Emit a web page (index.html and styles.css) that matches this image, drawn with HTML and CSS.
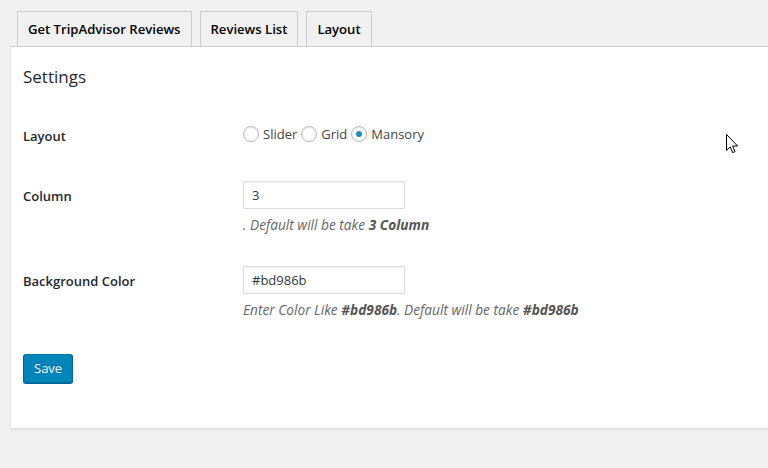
FILE: index.html
```html
<!DOCTYPE html>
<html>
<head>
<meta charset="utf-8">
<link rel="stylesheet" href="styles.css">
</head>
<body>
<div class="wrap">
  <nav class="tabs">
    <a class="tab">Get TripAdvisor Reviews</a>
    <a class="tab">Reviews List</a>
    <a class="tab">Layout</a>
  </nav>
  <div class="panel">
    <h2 class="title">Settings</h2>
    <div class="row row-layout">
      <div class="label">Layout</div>
      <div class="field radios">
        <label class="radio"><span class="dot"></span>Slider</label>
        <label class="radio"><span class="dot"></span>Grid</label>
        <label class="radio"><span class="dot checked"></span>Mansory</label>
      </div>
    </div>
    <div class="row">
      <div class="label">Column</div>
      <div class="field">
        <div class="input">3</div>
        <p class="desc">. Default will be take <b>3 Column</b></p>
      </div>
    </div>
    <div class="row">
      <div class="label">Background Color</div>
      <div class="field">
        <div class="input">#bd986b</div>
        <p class="desc">Enter Color Like <b>#bd986b</b>. Default will be take <b>#bd986b</b></p>
      </div>
    </div>
    <div class="actions">
      <button class="btn">Save</button>
    </div>
  </div>
</div>
<svg class="cursor" width="13" height="21" viewBox="0 0 13 21">
  <path d="M0.5 0.5 L0.5 16.5 L4.2 12.9 L6.6 18.6 L9 17.6 L6.6 12 L11.6 12 Z" fill="#fff" stroke="#000" stroke-width="1" stroke-linejoin="miter"/>
</svg>
</body>
</html>
```
FILE: styles.css
```css
html, body {
  margin: 0;
  padding: 0;
  background: #f1f1f1;
}
body {
  font-family: "Open Sans", "Noto Sans", sans-serif;
  color: #23282d;
  font-size: 13px;
  overflow: hidden;
  width: 768px;
  height: 468px;
  position: relative;
}
.wrap {
  padding: 11px 0 0 10px;
}
.tabs {
  display: flex;
  gap: 8px;
  padding-left: 7px;
  border-bottom: 1px solid #ccc;
  height: 36px;
  box-sizing: border-box;
}
.tab {
  display: block;
  box-sizing: border-box;
  height: 35px;
  padding: 0 10px;
  border: 1px solid #ccc;
  border-bottom: none;
  background: #f1f1f1;
  font-size: 13.1px;
  font-weight: 600;
  line-height: 35px;
  color: #000;
  white-space: nowrap;
}
.panel {
  background: #fff;
  border-left: 1px solid #e5e5e5;
  box-shadow: 0 1px 1px rgba(0,0,0,0.06);
  border-bottom: 1px solid #e2e2e2;
  height: 382px;
  box-sizing: border-box;
  padding: 0 0 0 12px;
}
.title {
  margin: 0;
  padding-top: 19px;
  height: 41px;
  box-sizing: border-box;
  font-size: 17px;
  font-weight: 400;
  line-height: 22px;
  color: #23282d;
}
.row {
  display: grid;
  grid-template-columns: 220px 1fr;
  min-height: 85px;
}
.row-layout {
  min-height: 60px;
  margin-top: 19px;
}
.label {
  padding-top: 20px;
  font-size: 13px;
  font-weight: 600;
  line-height: 18px;
  color: #23282d;
}
.field {
  padding-top: 14px;
}
.radios {
  padding-top: 18px;
  display: flex;
  align-items: center;
  line-height: 18px;
  height: 18px;
  font-size: 13px;
  color: #444;
}
.radio {
  display: flex;
  align-items: center;
  margin-right: 4px;
}
.dot {
  width: 14px;
  height: 14px;
  border: 1px solid #b4b9be;
  border-radius: 50%;
  box-shadow: inset 0 1px 2px rgba(0,0,0,0.1);
  margin-right: 4px;
  position: relative;
  background: #fff;
}
.dot.checked::after {
  content: "";
  position: absolute;
  left: 4px;
  top: 4px;
  width: 6px;
  height: 6px;
  border-radius: 50%;
  background: #1e8cbe;
}
.input {
  width: 162px;
  height: 28px;
  box-sizing: border-box;
  border: 1px solid #ddd;
  box-shadow: inset 0 1px 2px rgba(0,0,0,0.07);
  padding: 0 8px;
  line-height: 26px;
  font-size: 13px;
  color: #32373c;
}
.desc {
  margin: 7px 0 0;
  font-size: 13.7px;
  line-height: 18px;
  font-style: italic;
  color: #666;
  white-space: nowrap;
}
.desc b {
  font-weight: 700;
  color: #555;
}
.actions {
  padding-top: 17px;
}
.btn {
  display: block;
  height: 29px;
  padding: 0 10px 1px;
  font-family: inherit;
  font-size: 13px;
  line-height: 26px;
  color: #fff;
  background: #0085ba;
  border: 1px solid;
  border-color: #0073aa #006799 #006799;
  border-radius: 3px;
  box-shadow: 0 1px 0 #006799;
  text-shadow: 0 -1px 1px #006799;
}
.cursor {
  position: absolute;
  left: 726px;
  top: 134px;
}
```
